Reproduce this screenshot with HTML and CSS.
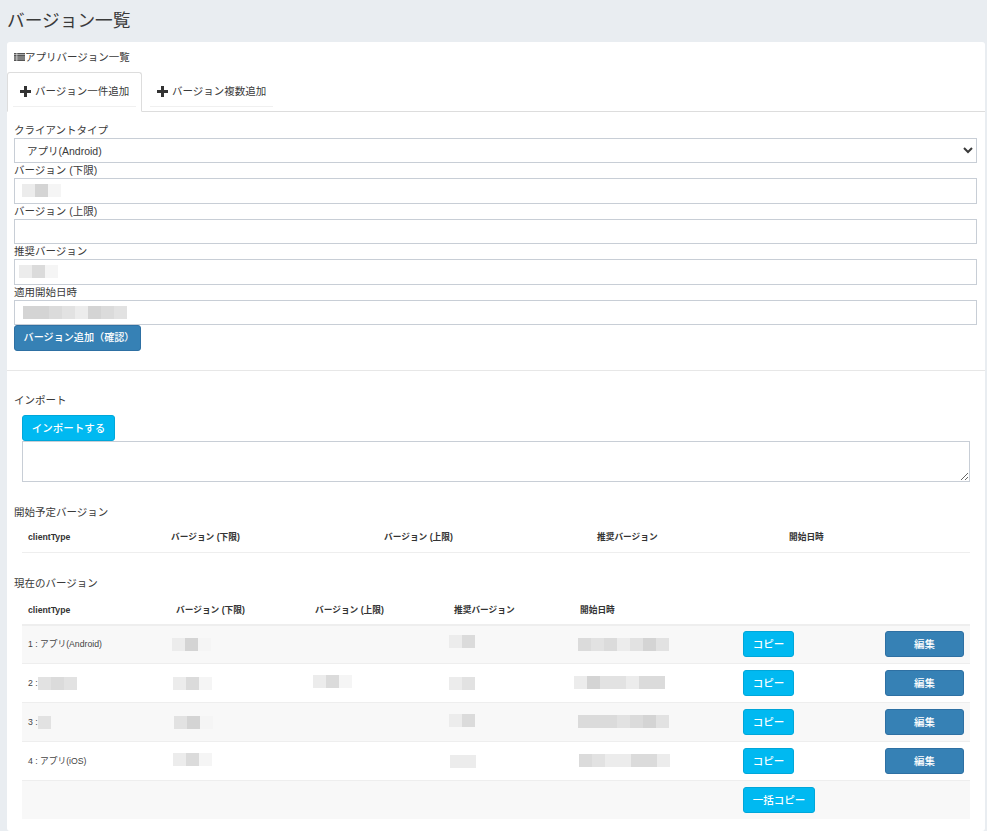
FILE: index.html
```html
<!DOCTYPE html>
<html lang="ja">
<head>
<meta charset="utf-8">
<title>バージョン一覧</title>
<link rel="stylesheet" href="styles.css">
</head>
<body>
<h1 class="page-title">バージョン一覧</h1>
<main class="card">
  <div class="card-head">
    <svg class="list-icon" viewBox="0 0 11 8" width="11" height="8"><path d="M0 0h2.6v1.6H0zM3.2 0H11v1.6H3.2zM0 2.1h2.6v1.6H0zM3.2 2.1H11v1.6H3.2zM0 4.2h2.6v1.6H0zM3.2 4.2H11v1.6H3.2zM0 6.3h2.6v1.6H0zM3.2 6.3H11v1.6H3.2z" fill="#555"/></svg><span>アプリバージョン一覧</span>
  </div>
  <nav class="tabs">
    <a class="tab tab-active"><span class="tab-inner"><svg class="plus" viewBox="0 0 11 11" width="11" height="11"><path d="M4 0h3v4h4v3H7v4H4V7H0V4h4z" fill="#333"/></svg>バージョン一件追加</span></a>
    <a class="tab"><span class="tab-inner"><svg class="plus" viewBox="0 0 11 11" width="11" height="11"><path d="M4 0h3v4h4v3H7v4H4V7H0V4h4z" fill="#333"/></svg>バージョン複数追加</span></a>
  </nav>
  <form class="form">
    <label class="field-label">クライアントタイプ</label>
    <select class="control select"><option>アプリ(Android)</option></select>
    <label class="field-label">バージョン (下限)</label>
    <div class="field">
      <input class="control" type="text">
      <span class="mosaic over o1"><i class="s1"></i><i class="s4"></i><i class="s0"></i></span>
    </div>
    <label class="field-label">バージョン (上限)</label>
    <div class="field"><input class="control" type="text"></div>
    <label class="field-label">推奨バージョン</label>
    <div class="field">
      <input class="control" type="text">
      <span class="mosaic over o2"><i class="s1"></i><i class="s3"></i><i class="s0"></i></span>
    </div>
    <label class="field-label">適用開始日時</label>
    <div class="field">
      <input class="control" type="text">
      <span class="mosaic over o3"><i class="s4"></i><i class="s4"></i><i class="s3"></i><i class="s2"></i><i class="s1"></i><i class="s4"></i><i class="s3"></i><i class="s2"></i></span>
    </div>
    <button class="btn btn-primary btn-submit" type="button">バージョン追加（確認）</button>
  </form>
  <hr class="rule">
  <section class="import">
    <h2 class="sec-title">インポート</h2>
    <div class="indent">
      <button class="btn btn-info btn-import" type="button">インポートする</button>
      <textarea class="textarea"></textarea>
    </div>
  </section>
  <section class="planned">
    <h2 class="sec-title">開始予定バージョン</h2>
    <div class="indent">
      <table class="tbl tbl-planned">
        <colgroup><col class="p1"><col class="p2"><col class="p3"><col class="p4"><col></colgroup>
        <thead><tr><th>clientType</th><th>バージョン (下限)</th><th>バージョン (上限)</th><th>推奨バージョン</th><th>開始日時</th></tr></thead>
      </table>
    </div>
  </section>
  <section class="current">
    <h2 class="sec-title">現在のバージョン</h2>
    <div class="indent">
      <table class="tbl tbl-current">
        <colgroup><col class="c1"><col class="c2"><col class="c3"><col class="c4"><col class="c5"><col class="c6"><col></colgroup>
        <thead><tr><th>clientType</th><th>バージョン (下限)</th><th>バージョン (上限)</th><th>推奨バージョン</th><th>開始日時</th><th></th><th></th></tr></thead>
        <tbody>
          <tr>
            <td>1 : アプリ(Android)</td>
            <td><span class="mosaic n4"><i class="s1"></i><i class="s4"></i><i class="s0"></i></span></td>
            <td></td>
            <td><span class="mosaic n5 u3"><i class="s1"></i><i class="s3"></i></span></td>
            <td><span class="mosaic n2"><i class="s3"></i><i class="s2"></i><i class="s3"></i><i class="s1"></i><i class="s2"></i><i class="s4"></i><i class="s2"></i></span></td>
            <td><button class="btn btn-info btn-copy" type="button">コピー</button></td>
            <td><button class="btn btn-primary btn-edit" type="button">編集</button></td>
          </tr>
          <tr>
            <td>2 : <span class="mosaic n2"><i class="s2"></i><i class="s3"></i><i class="s2"></i></span></td>
            <td><span class="mosaic n3"><i class="s1"></i><i class="s3"></i><i class="s0"></i></span></td>
            <td><span class="mosaic n2 u2"><i class="s1"></i><i class="s3"></i><i class="s0"></i></span></td>
            <td><span class="mosaic n5"><i class="s1"></i><i class="s2"></i></span></td>
            <td><span class="mosaic n6 u1"><i class="s1"></i><i class="s4"></i><i class="s2"></i><i class="s2"></i><i class="s1"></i><i class="s3"></i><i class="s3"></i></span></td>
            <td><button class="btn btn-info btn-copy" type="button">コピー</button></td>
            <td><button class="btn btn-primary btn-edit" type="button">編集</button></td>
          </tr>
          <tr>
            <td>3 : <span class="mosaic n2"><i class="s2"></i></span></td>
            <td><span class="mosaic n2"><i class="s2"></i><i class="s4"></i><i class="s0"></i></span></td>
            <td></td>
            <td><span class="mosaic n5 u2"><i class="s1"></i><i class="s3"></i></span></td>
            <td><span class="mosaic n2 u1"><i class="s3"></i><i class="s3"></i><i class="s3"></i><i class="s2"></i><i class="s3"></i><i class="s4"></i><i class="s2"></i></span></td>
            <td><button class="btn btn-info btn-copy" type="button">コピー</button></td>
            <td><button class="btn btn-primary btn-edit" type="button">編集</button></td>
          </tr>
          <tr>
            <td>4 : アプリ(iOS)</td>
            <td><span class="mosaic n3 u2"><i class="s1"></i><i class="s3"></i><i class="s0"></i></span></td>
            <td></td>
            <td><span class="mosaic n4"><i class="s1"></i><i class="s1"></i></span></td>
            <td><span class="mosaic n1 u1"><i class="s3"></i><i class="s2"></i><i class="s1"></i><i class="s1"></i><i class="s3"></i><i class="s3"></i><i class="s1"></i></span></td>
            <td><button class="btn btn-info btn-copy" type="button">コピー</button></td>
            <td><button class="btn btn-primary btn-edit" type="button">編集</button></td>
          </tr>
          <tr class="row-bulk">
            <td></td><td></td><td></td><td></td><td></td>
            <td colspan="2"><button class="btn btn-info btn-bulk" type="button">一括コピー</button></td>
          </tr>
        </tbody>
      </table>
    </div>
  </section>
</main>
</body>
</html>
```
FILE: styles.css
```css
* { box-sizing: border-box; }
html, body { margin: 0; height: 831px; overflow: hidden; }
body {
  background: #e9edf1;
  color: #3a3a3a;
  font-family: "Liberation Sans", "Noto Sans CJK JP", sans-serif;
  font-size: 10.5px;
  line-height: 15px;
  padding: 0 2px 0 7px;
}
.page-title {
  margin: 0;
  height: 42px;
  font-size: 17.7px;
  font-weight: 400;
  line-height: 42px;
}
.card {
  background: #fff;
  border-radius: 3px;
  height: 789px;
}
.card-head {
  height: 30px;
  padding: 0 0 0 7px;
  display: flex;
  align-items: center;
}
.list-icon { flex: none; }
.tabs {
  display: flex;
  height: 40px;
  border-bottom: 1px solid #ddd;
}
.tab {
  display: block;
  width: 135px;
  height: 40px;
  padding: 0 5px;
  border: 1px solid transparent;
  margin-right: 2px;
}
.tab-active {
  background: #fff;
  border-color: #ddd #ddd #fff;
  border-radius: 3px 3px 0 0;
}
.tab-inner {
  display: flex;
  align-items: center;
  height: 34px;
  padding: 4px 0 0 7px;
  border-bottom: 1px solid #f0f0f0;
}
.plus { margin-right: 4px; flex: none; }
.form { padding: 10.75px 8px 0 7px; }
.field-label { display: block; height: 15px; line-height: 15px; }
.field { position: relative; }
.control {
  display: block;
  width: 100%;
  height: 25.5px;
  border: 1px solid #c8ced6;
  background: #fff;
  padding: 0 8px;
  color: #3a3a3a;
  font: inherit;
  border-radius: 0;
}
.btn {
  display: inline-block;
  height: 26px;
  border: 1px solid;
  border-radius: 3px;
  font-family: inherit;
  font-size: 10.5px;
  font-weight: 500;
  line-height: 14px;
  color: #fff;
  padding: 0;
  text-align: center;
  vertical-align: top;
}
.btn-primary { background: #3681b5; border-color: #2e70a3; }
.btn-info { background: #00b9f1; border-color: #00a7da; }
.btn-submit { width: 127px; font-size: 10.1px; padding-left: 3px; }
.btn-import { width: 93px; display: block; }
.btn-copy { width: 51px; }
.btn-edit { width: 79px; }
.btn-bulk { width: 72px; }
.rule {
  border: 0;
  border-top: 1px solid #e7e7e7;
  margin: 18.75px 0 0;
}
.sec-title {
  margin: 0;
  font-size: 10.5px;
  font-weight: 400;
  line-height: 15px;
  padding-left: 7px;
}
.import { padding-top: 22px; }
.import .indent { padding-top: 7px; }
.indent { padding: 0 15px; }
.textarea {
  display: block;
  width: 100%;
  height: 41px;
  border: 1px solid #c8ced6;
  border-radius: 0;
  background: #fff;
  margin: 0;
  font: inherit;
}
.planned { padding-top: 23px; }
.planned .indent { padding-top: 4px; }
.current { padding-top: 23px; }
.current .indent { padding-top: 7px; }
.tbl {
  width: 948px;
  table-layout: fixed;
  border-collapse: collapse;
  font-size: 8.7px;
}
.tbl th {
  height: 28px;
  padding: 0 6px;
  font-weight: 700;
  text-align: left;
  color: #333;
  border-bottom: 1px solid #eee;
}
.tbl-current th { border-bottom-width: 2px; height: 27px; }
.tbl td {
  height: 39px;
  padding: 0 6px;
  border-top: 1px solid #eee;
  vertical-align: middle;
  color: #444;
}
.tbl .row-bulk td {
  height: 38px;
  padding-top: 6px;
  vertical-align: top;
}
.tbl tbody tr:nth-child(odd) { background: #f8f8f8; }
.p1 { width: 143px; }
.p2 { width: 213px; }
.p3 { width: 213px; }
.p4 { width: 192px; }
.c1 { width: 148px; }
.c2 { width: 139px; }
.c3 { width: 139px; }
.c4 { width: 126px; }
.c5 { width: 163px; }
.c6 { width: 142px; }
.mosaic { display: inline-flex; vertical-align: middle; }
.mosaic i { display: block; width: 13px; height: 13px; }
.over { position: absolute; top: 6px; }
.o1 { left: 8px; }
.o2 { left: 5px; }
.o3 { left: 9px; }
.n1 { margin-left: -1px; }
.n2 { margin-left: -2px; }
.n3 { margin-left: -3px; }
.n4 { margin-left: -4px; }
.n5 { margin-left: -5px; }
.n6 { margin-left: -6px; }
.u1 { margin-bottom: 2px; }
.u2 { margin-bottom: 4px; }
.u3 { margin-bottom: 6px; }
.s0 { background: #f5f5f5; }
.s1 { background: #ececec; }
.s2 { background: #e2e2e2; }
.s3 { background: #dbdbdb; }
.s4 { background: #d4d4d4; }
```
